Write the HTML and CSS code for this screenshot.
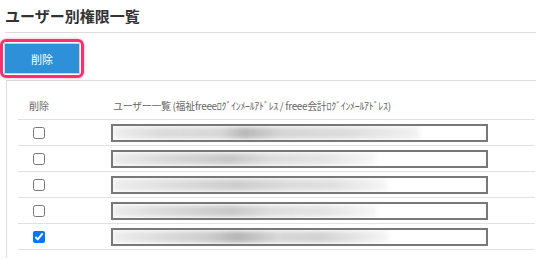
FILE: index.html
```html
<!DOCTYPE html>
<html lang="ja">
<head>
    <meta charset="UTF-8">
    <title>ユーザー別権限一覧</title>
    <link rel="stylesheet" href="styles.css">
</head>
<body>
    <div class="page">
        <h1 class="page-title">ユーザー別権限一覧</h1>

        <div class="actions">
            <div class="highlight">
                <button class="btn-delete">削除</button>
            </div>
        </div>

        <div class="panel">
            <div class="user-table">
                <div class="row head">
                    <div class="cell col-check">削除</div>
                    <div class="cell col-user"><span class="head-label">ユーザー一覧 (福祉freeeﾛｸﾞｲﾝﾒｰﾙｱﾄﾞﾚｽ / freee会計ﾛｸﾞｲﾝﾒｰﾙｱﾄﾞﾚｽ)</span></div>
                </div>
                <div class="row">
                    <div class="cell col-check"><input type="checkbox"></div>
                    <div class="cell col-user"><div class="mail-box"><span class="blur b1" style="width: 306px"></span></div></div>
                </div>
                <div class="row">
                    <div class="cell col-check"><input type="checkbox"></div>
                    <div class="cell col-user"><div class="mail-box"><span class="blur b2" style="width: 262px"></span></div></div>
                </div>
                <div class="row">
                    <div class="cell col-check"><input type="checkbox"></div>
                    <div class="cell col-user"><div class="mail-box"><span class="blur b3" style="width: 274px"></span></div></div>
                </div>
                <div class="row">
                    <div class="cell col-check"><input type="checkbox"></div>
                    <div class="cell col-user"><div class="mail-box"><span class="blur b2" style="width: 264px"></span></div></div>
                </div>
                <div class="row">
                    <div class="cell col-check"><input type="checkbox" checked></div>
                    <div class="cell col-user"><div class="mail-box"><span class="blur b4" style="width: 276px"></span></div></div>
                </div>
            </div>
        </div>
    </div>
</body>
</html>
```

FILE: styles.css
```css
html, body {
    margin: 0;
    background: #fff;
    overflow: hidden;
}

body {
    font-family: "Noto Sans CJK JP", "Liberation Sans", sans-serif;
    color: #333;
}

.page {
    padding: 0 0 0 5px;
    width: 531px;
}

.page-title {
    margin: 0;
    padding-top: 5px;
    height: 27px;
    font-size: 15px;
    line-height: 22px;
    font-weight: bold;
    color: #333;
    border-bottom: 1px solid #ddd;
}

.actions {
    padding-top: 6px;
    margin-left: -5px;
    height: 41px;
}

.highlight {
    display: inline-block;
    border: 3px solid #fb2f6d;
    border-radius: 6px;
    padding: 1px;
    box-shadow: 0 0 3px rgba(251, 47, 109, 0.45);
}

.btn-delete {
    display: block;
    width: 76px;
    height: 31px;
    border: 1px solid #d0d0d0;
    background: #2e90d8;
    color: #fff;
    font-family: inherit;
    font-size: 11px;
    padding: 0;
    cursor: pointer;
}

.panel {
    margin-left: 1px;
    border-left: 1px solid #ddd;
    border-top: 1px solid #ddd;
    padding: 12px 0 8px 11px;
}

.user-table {
    width: 517px;
}

.row {
    display: grid;
    grid-template-columns: 82px 1fr;
    height: 26px;
    border-bottom: 1px solid #e2e2e2;
    box-sizing: border-box;
}

.row.head {
    height: 27px;
}

.cell {
    display: flex;
    align-items: center;
    padding-left: 11px;
}

.head .cell {
    font-size: 10px;
    color: #666;
    padding-bottom: 2px;
}

.head-label {
    padding-left: 2px;
    letter-spacing: -0.35px;
    white-space: nowrap;
}

.col-check input {
    margin: 0 0 0 4px;
    width: 12px;
    height: 12px;
}

.mail-box {
    width: 377px;
    height: 18px;
    border: 2px solid #787878;
    box-sizing: border-box;
    overflow: hidden;
    display: flex;
    align-items: center;
}

.blur {
    display: block;
    height: 12px;
    filter: blur(2px);
}

.b1 {
    background: linear-gradient(90deg, #efefef 0%, #dcdcdc 15%, #d8d8d8 35%, #b8b8b8 43%, #d6d6d6 55%, #dcdcdc 75%, #f2f2f2 100%);
}

.b2 {
    background: linear-gradient(90deg, #ececec 0%, #dadada 20%, #c8c8c8 45%, #dedede 60%, #e4e4e4 80%, #f7f7f7 100%);
}

.b3 {
    background: linear-gradient(90deg, #eeeeee 0%, #d8d8d8 30%, #cdcdcd 45%, #dddddd 65%, #e0e0e0 80%, #f6f6f6 100%);
}

.b4 {
    background: linear-gradient(90deg, #eeeeee 0%, #dadada 20%, #cccccc 35%, #b5b5b5 45%, #d8d8d8 60%, #d2d2d2 75%, #e8e8e8 90%, #f7f7f7 100%);
}
```
